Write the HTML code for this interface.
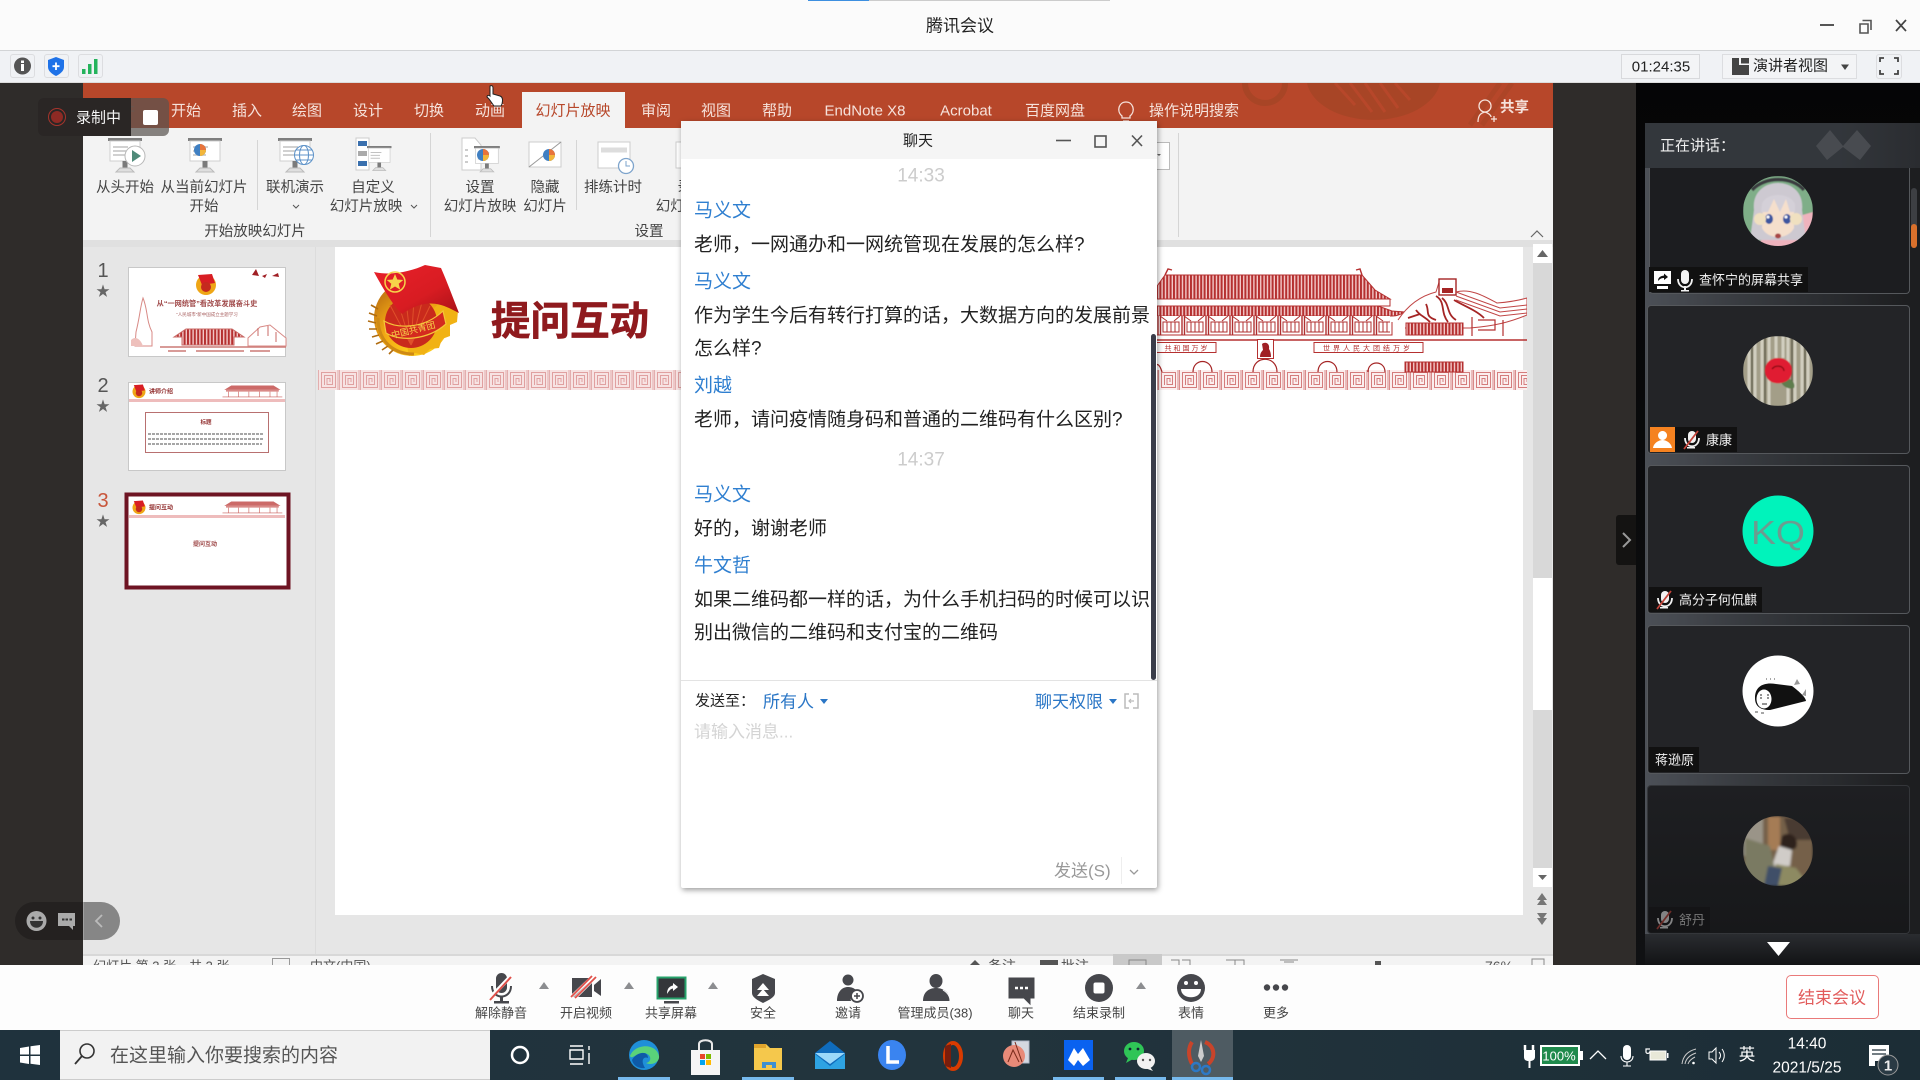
<!DOCTYPE html>
<html lang="zh-CN">
<head>
<meta charset="utf-8">
<title>腾讯会议</title>
<style>
html,body{margin:0;padding:0;width:1920px;height:1080px;overflow:hidden;background:#2f2c2a}
body{position:relative;font-family:"Liberation Sans","Noto Sans CJK SC",sans-serif;color:#222}
div,span{position:absolute;box-sizing:border-box}
svg{position:absolute;left:0;top:0;overflow:hidden}
.t{white-space:nowrap;line-height:1;transform:translateY(-50%)}
.c{white-space:nowrap;line-height:1;transform:translate(-50%,-50%)}
.rt{font-size:15px;color:#f6e2db;top:110px}
.rb{font-size:14.5px;color:#444}
.msg{font-size:19px;color:#222;left:694px}
.nm{font-size:19px;color:#2f7fd0;left:694px}
.tm{font-size:13px;color:#444;top:1013px}
.lb{background:#111;height:25px}
.nl{font-size:13px;color:#f2f2f2}
</style>
</head>
<body>
<!-- title bar -->
<div style="left:0;top:0;width:1920px;height:50px;background:#fbfbfb"></div>
<div style="left:808px;top:0;width:61px;height:1px;background:#3d8fe0"></div>
<div style="left:869px;top:0;width:241px;height:1px;background:#ccc"></div>
<div class="c" style="left:960px;top:26px;font-size:17px;color:#222">腾讯会议</div>
<div style="left:0;top:50px;width:1920px;height:33px;background:#f0f2f5;border-top:1px solid #d2d4d6;border-bottom:1px solid #dcdcdc"></div>

<!-- dark bg -->
<div style="left:0;top:83px;width:1636px;height:882px;background:#2f2c2a"></div>
<div style="left:1636px;top:83px;width:284px;height:882px;background:linear-gradient(180deg,#050506,#101113)"></div>

<!-- PPT -->
<div style="left:83px;top:83px;width:1470px;height:882px;background:#e6e6e6"></div>
<div style="left:83px;top:83px;width:1470px;height:45px;background:#b7472a"></div>
<div style="left:522px;top:92px;width:103px;height:36px;background:#f3f3f3"></div>
<div style="left:83px;top:128px;width:1470px;height:112px;background:#f3f3f3"></div>
<div style="left:83px;top:240px;width:1470px;height:7px;background:#e0e0e0"></div>
<div style="left:315px;top:247px;width:1238px;height:708px;background:#e6e6e6;border-left:1px solid #dcdcdc"></div>
<div style="left:335px;top:247px;width:1188px;height:668px;background:#fff"></div>
<div style="left:1533px;top:244px;width:19px;height:643px;background:#d8d8d8"></div>
<div style="left:1533px;top:244px;width:19px;height:19px;background:#fff"></div>
<div style="left:1533px;top:578px;width:19px;height:132px;background:#fff"></div>
<div style="left:1533px;top:868px;width:19px;height:19px;background:#fff"></div>
<div style="left:83px;top:954px;width:1470px;height:11px;background:#f3f3f3;border-top:2px solid #d8d8d8"></div>
<div style="left:1113px;top:954px;width:49px;height:11px;background:#c9c9c9"></div>

<div class="rt c" style="left:120px;top:111px;color:#8f5a4a">文件</div>
<div class="rt c" style="left:186px;top:110.500px">开始</div>
<div class="rt c" style="left:247px;top:110.500px">插入</div>
<div class="rt c" style="left:307px;top:110.500px">绘图</div>
<div class="rt c" style="left:368px;top:110.500px">设计</div>
<div class="rt c" style="left:429px;top:110.500px">切换</div>
<div class="rt c" style="left:490px;top:110.500px">动画</div>
<div class="rt c" style="left:573px;top:110.500px;color:#b7472a">幻灯片放映</div>
<div class="rt c" style="left:656px;top:110.500px">审阅</div>
<div class="rt c" style="left:716px;top:110.500px">视图</div>
<div class="rt c" style="left:777px;top:110.500px">帮助</div>
<div class="rt c" style="left:865px;top:110.500px">EndNote X8</div>
<div class="rt c" style="left:966px;top:110.500px">Acrobat</div>
<div class="rt c" style="left:1055px;top:110.500px">百度网盘</div>
<div class="rt t" style="left:1149px;top:110.500px">操作说明搜索</div>
<div class="rt t" style="left:1500px;top:108px;font-weight:bold;font-size:14.500px">共享</div>

<div class="rb c" style="left:125px;top:188px">从头开始</div>
<div class="rb c" style="left:204px;top:188px">从当前幻灯片</div>
<div class="rb c" style="left:204px;top:207px">开始</div>
<div class="rb c" style="left:295px;top:188px">联机演示</div>
<div class="rb c" style="left:373px;top:188px">自定义</div>
<div class="rb c" style="left:366px;top:207px">幻灯片放映</div>
<div class="rb c" style="left:480px;top:188px">设置</div>
<div class="rb c" style="left:480px;top:207px">幻灯片放映</div>
<div class="rb c" style="left:545px;top:188px">隐藏</div>
<div class="rb c" style="left:545px;top:207px">幻灯片</div>
<div class="rb c" style="left:613px;top:188px">排练计时</div>
<div class="rb c" style="left:692px;top:188px">录制</div>
<div class="rb c" style="left:692px;top:207px">幻灯片演示</div>
<div class="rb c" style="left:255px;top:232px">开始放映幻灯片</div>
<div class="rb c" style="left:649px;top:232px">设置</div>

<div class="c" style="left:103px;top:271px;font-size:20px;color:#555">1</div>
<div class="c" style="left:103px;top:386px;font-size:20px;color:#555">2</div>
<div class="c" style="left:103px;top:501px;font-size:20px;color:#c8553a">3</div>

<!-- status bar text clipped by toolbar -->
<div class="t" style="left:93px;top:966px;font-size:13px;color:#555">幻灯片 第 3 张，共 3 张</div>
<div class="t" style="left:310px;top:966px;font-size:13px;color:#555">中文(中国)</div>
<div class="t" style="left:988px;top:966px;font-size:14px;color:#555">备注</div>
<div class="t" style="left:1061px;top:966px;font-size:14px;color:#555">批注</div>
<div class="t" style="left:1485px;top:966px;font-size:14px;color:#555">76%</div>

<!-- PPT graphics -->
<svg width="1920" height="1080" viewBox="0 0 1920 1080">
<defs>
<pattern id="key" width="21" height="20" patternUnits="userSpaceOnUse" x="318" y="370">
<rect width="21" height="20" fill="#f7e3e3"/>
<path d="M.5 0V20M20 0V20" stroke="#e3aeae" stroke-width="1"/>
<path d="M3.500 2.500H17.500V17.500H3.500ZM6.500 15V5.500H14.500V14.500H9V8.500H12V12" fill="none" stroke="#e0a0a0" stroke-width="1"/>
</pattern>
<pattern id="keyr" width="21" height="20" patternUnits="userSpaceOnUse" x="318" y="370">
<rect width="21" height="20" fill="#fbeeee"/>
<path d="M.5 0V20M20 0V20" stroke="#d88a8a" stroke-width="1"/>
<path d="M3.500 2.500H17.500V17.500H3.500ZM6.500 15V5.500H14.500V14.500H9V8.500H12V12" fill="none" stroke="#d47c7c" stroke-width="1"/>
</pattern>
<pattern id="roof" width="3.400" height="10" patternUnits="userSpaceOnUse">
<rect width="3.400" height="10" fill="#f3c9c9"/><rect width="2" height="10" fill="#b53030"/>
</pattern>
<pattern id="win" width="24" height="19" patternUnits="userSpaceOnUse" x="1157" y="316">
<rect width="24" height="19" fill="#fff"/>
<path d="M1 0V19M3.500 0V19" stroke="#b03030" stroke-width="1.400"/>
<path d="M6 6H22V16H6ZM10 6V16M14 6V16M18 6V16" fill="none" stroke="#b03030" stroke-width="1"/>
<path d="M3 0L10 5M23 0L17 5" stroke="#b03030" stroke-width="1"/>
</pattern>
<radialGradient id="gold" cx=".6" cy=".8" r=".75"><stop offset="0" stop-color="#ffdf20"/><stop offset=".6" stop-color="#f4ab14"/><stop offset="1" stop-color="#c87c12"/></radialGradient>
<linearGradient id="flag" x1="0" y1="0" x2="1" y2="1"><stop offset="0" stop-color="#e8202a"/><stop offset=".6" stop-color="#d81c22"/><stop offset="1" stop-color="#a81218"/></linearGradient>
<filter id="bl" x="-5%" y="-5%" width="110%" height="110%"><feGaussianBlur stdDeviation="1.200"/></filter>
<filter id="bl2" x="-5%" y="-5%" width="110%" height="110%"><feGaussianBlur stdDeviation=".5"/></filter>
<g id="emb">
<circle cx="0" cy="1" r="10" fill="#efa616"/><path d="M-8 -9L6 -10L9 -1L-4 1Z" fill="#d81e24"/><circle cx="0" cy="3" r="5" fill="#c52a1e"/>
</g>
<g id="blg" fill="none" stroke="#c9605c" stroke-width=".7">
<path d="M6 4H54L62 9H-2Z" fill="#cc6a68" stroke="none"/><path d="M0 9H60V11H0Z" fill="#d98a88" stroke="none"/><path d="M3 11V17M14 11V17M26 11V17M38 11V17M50 11V17M58 11V17M-4 17H64"/>
</g>
<g id="bd">
<rect x="0" y="0" width="34" height="3" fill="#7e7e7e"/>
<rect x="2" y="3" width="30" height="20" fill="#fff" stroke="#cfcfcf"/>
<path d="M5 9H20M5 13H18M5 17H18" stroke="#c2c2c2" stroke-width="1.400"/>
<rect x="14.500" y="23" width="5" height="8" fill="#7b7b7b"/>
<path d="M8 34L12 30H22L26 34Z" fill="#dfdfdf" stroke="#bbb"/>
</g>
<g id="pie"><circle r="6" fill="#3f7fc2"/><path d="M0 0V-6A6 6 0 0 1 6 0Z" fill="#e8743b"/><path d="M0 0H6A6 6 0 0 1 0 6Z" fill="#f3b63a"/></g>
<clipPath id="a1"><circle cx="1778" cy="211" r="35"/></clipPath>
<clipPath id="a2"><circle cx="1778" cy="371" r="35"/></clipPath>
<clipPath id="a4"><circle cx="1778" cy="691" r="35"/></clipPath>
<clipPath id="a5"><circle cx="1778" cy="851" r="35"/></clipPath>
<clipPath id="slide"><rect x="1157" y="247" width="370" height="150"/></clipPath>
<clipPath id="rib"><rect x="1190" y="83" width="363" height="45"/></clipPath>
</defs>

<!-- ribbon deco -->
<g clip-path="url(#rib)" fill="none" stroke="#a84526">
<circle cx="1265" cy="83" r="20" stroke-width="6"/>
<path d="M1307 83A67 42 0 0 0 1440 83Z" fill="#a84526" stroke="none"/>
<path d="M1335 83L1355 105M1350 83L1372 112M1365 83L1385 112M1380 83L1398 108M1395 83L1410 100" stroke="#b7472a" stroke-width="3"/>
<path d="M1470 125L1500 83M1482 125L1512 83" stroke-width="5" opacity=".7"/>
</g>
<!-- lightbulb, share person -->
<g fill="none" stroke="#f6e2db" stroke-width="1.300">
<path d="M1122 116C1116 111 1119 102 1126 102C1133 102 1136 111 1130 116V118H1122ZM1123 121H1129"/>
<circle cx="1485" cy="106" r="6"/><path d="M1478 122C1478 115 1481 113 1485 112C1488 113 1491 115 1491 117M1491 119H1497M1494 116V122"/>
</g>
<!-- ribbon separators -->
<g stroke="#d5d5d5">
<path d="M430.500 133V237M1178.500 133V237M257.500 140V210M576.500 140V210"/>
</g>
<path d="M1531 237L1537 231L1543 237" fill="none" stroke="#666" stroke-width="1.200"/>
<path d="M293 205l3 3l3-3M411 205l3 3l3-3" fill="none" stroke="#555"/>
<rect x="1150.500" y="142.500" width="19" height="27" fill="#fff" stroke="#bbb"/>
<path d="M1157 154h4l-2 2z" fill="#666"/>
<!-- ribbon icons -->
<use href="#bd" x="108" y="138"/>
<circle cx="135" cy="156" r="10" fill="#fff" stroke="#b8b8b8"/><path d="M132 150L141 156L132 162Z" fill="#4f8a79"/>
<use href="#bd" x="188" y="138"/><use href="#pie" x="200" y="150"/>
<use href="#bd" x="278" y="138"/>
<g fill="#fff" stroke="#5d92c8" stroke-width="1"><circle cx="304" cy="155" r="9.500"/><ellipse cx="304" cy="155" rx="4.500" ry="9.500" fill="none"/><path d="M294.500 155H313.500M296 150H312M296 160H312" fill="none"/></g>
<rect x="356" y="138" width="13" height="32" fill="#fff" stroke="#ccc"/><rect x="358" y="141" width="9" height="5" fill="#3a70ae"/><rect x="358" y="151" width="9" height="5" fill="#aaa"/><rect x="358" y="161" width="9" height="5" fill="#3a70ae"/>
<g transform="translate(367,146) scale(.72)"><use href="#bd"/></g>
<path d="M462 138H475L481 145V170H462Z" fill="#fff" stroke="#ccc"/><path d="M465 150h3M465 156h3M465 162h3" stroke="#999"/>
<g transform="translate(474,146) scale(.76)"><use href="#bd"/></g><use href="#pie" x="483" y="155"/>
<rect x="529" y="142" width="32" height="25" fill="#fff" stroke="#ccc"/><path d="M529 167L561 142" stroke="#999"/><use href="#pie" x="549" y="155"/>
<rect x="598" y="142" width="32" height="26" fill="#fff" stroke="#ccc"/><path d="M601 150H627" stroke="#ddd" stroke-width="5"/>
<circle cx="626" cy="166" r="7.500" fill="#fff" stroke="#7ea4cc" stroke-width="1.300"/><path d="M626 161V166H630" fill="none" stroke="#7ea4cc"/>
<rect x="676" y="142" width="30" height="26" fill="#fff" stroke="#ccc"/>

<!-- stars -->
<g fill="#666" font-size="14" text-anchor="middle"><text x="103" y="296">★</text><text x="103" y="411">★</text><text x="103" y="526">★</text></g>

<!-- thumbs -->
<rect x="128.500" y="267.500" width="157" height="89" fill="#fff" stroke="#c8c8c8"/>
<use href="#emb" x="206" y="284"/>
<text x="207" y="306" font-size="7.200" font-weight="bold" fill="#a04a4a" text-anchor="middle">从“一网统管”看改革发展奋斗史</text>
<text x="207" y="316" font-size="4.500" fill="#a86060" text-anchor="middle">“人民城市”新中国成立主题学习</text>
<path d="M174 337L186 329H232L244 337H234V345H182V337Z" fill="url(#roof)" stroke="#c96a66"/>
<path d="M160 347H286M168 351H186M196 351H244M250 351H270" stroke="#cc7a76" stroke-width="1.600"/>
<path d="M136 332C140 316 140 308 143 298C148 310 146 320 152 332V346H135Z" fill="#fff" stroke="#d88a86"/><path d="M131 340C135 336 140 338 143 346H131Z" fill="#eec0bc"/>
<path d="M248 338L260 327L270 325L286 338V346H248Z" fill="#fff" stroke="#d88a86"/><path d="M258 328V336M268 326V336M276 332V342" stroke="#c96a66"/>
<path d="M252 275l4-6l3 7zM262 276l5-2l-2 4zM272 276l6-3l1 4z" fill="#a01f24"/>
<rect x="128.500" y="382.500" width="157" height="88" fill="#fff" stroke="#c8c8c8"/>
<g transform="translate(139,391) scale(.65)"><use href="#emb"/></g>
<text x="149" y="393.500" font-size="6" font-weight="bold" fill="#8f2a2a">讲师介绍</text>
<g transform="translate(226,382) scale(.88)"><use href="#blg"/></g>
<rect x="129" y="399" width="156" height="3" fill="#eebcbc"/>
<rect x="145.500" y="412.500" width="123" height="40" fill="#fff" stroke="#b87070"/>
<text x="206" y="424" font-size="5.500" font-weight="bold" fill="#8f2a2a" text-anchor="middle">标题</text>
<g stroke="#888" stroke-width="1.400" stroke-dasharray="3 1"><path d="M148 434H264M148 439H264M148 444H262"/></g>
<rect x="126.500" y="494.500" width="162" height="93" fill="#fff" stroke="#6e1423" stroke-width="4"/>
<g transform="translate(139,507) scale(.65)"><use href="#emb"/></g>
<text x="149" y="509.500" font-size="6" font-weight="bold" fill="#8f2a2a">提问互动</text>
<g transform="translate(226,498) scale(.88)"><use href="#blg"/></g>
<rect x="129" y="515" width="156" height="3" fill="#eebcbc"/>
<text x="205" y="546" font-size="6" font-weight="bold" fill="#9c4444" text-anchor="middle">提问互动</text>

<!-- slide band + emblem -->
<rect x="318" y="370" width="840" height="20" fill="url(#key)"/>
<rect x="1157" y="370" width="370" height="20" fill="url(#keyr)"/>
<g>
<circle cx="412" cy="318" r="38" fill="url(#gold)"/>
<path d="M445 296l7 3l-1 9l7 3l-1 11l-7 3l0 11l-8 3l-3 9l-9 1l-6 6l-9-2l-6 3l-3-16z" fill="#f1b214"/>
<g fill="none" stroke="#b06c10" stroke-width="1.600"><path d="M371 305l7 4M369 313l8 3M368 321l8 2M369 329l8 0M372 337l7-2M376 344l7-3M382 350l6-4M389 354l5-5"/></g>
<path d="M378 318C378 342 394 354 414 354" fill="none" stroke="#cf8a14" stroke-width="3"/>
<circle cx="411" cy="322" r="26" fill="#c92a1c"/>
<g stroke="#e0502a" stroke-width="1"><path d="M411 345L390 305M411 345L398 302M411 345L406 300M411 345L414 300M411 345L422 302M411 345L430 306"/></g>
<path d="M384 321C398 329 424 329 443 311L446 324C428 340 400 342 386 333Z" fill="#d42a1f" stroke="#f5c63a" stroke-width="1.200"/>
<text x="414" y="333" font-size="9" fill="#f7d34a" text-anchor="middle" transform="rotate(-14 414 333)">中国共青团</text>
<path d="M374 272C392 276 412 271 425 265L441 268C448 284 453 298 459 313L449 308C432 300 418 303 402 314C394 306 386 294 374 272Z" fill="url(#flag)"/>
<circle cx="395" cy="282" r="10" fill="none" stroke="#f7d34a" stroke-width="1.500"/>
<path d="M395 274l2.300 5.500l6 .5l-4.600 3.800l1.500 5.800l-5.200-3.100l-5.200 3.100l1.500-5.800l-4.600-3.800l6-.5z" fill="#f7d34a"/>
</g>
<text x="491" y="335" font-size="39.500" font-weight="bold" fill="#8f1a1e" font-family="Liberation Sans,Noto Sans CJK SC,sans-serif" stroke="#8f1a1e" stroke-width=".7">提问互动</text>

<!-- Tiananmen -->
<g clip-path="url(#slide)">
<path d="M1150 296L1165 275H1362L1375 290L1390 299H1150Z" fill="url(#roof)" stroke="#b53030"/>
<path d="M1165 275L1168 269L1172 270M1362 275L1360 269L1356 270" fill="none" stroke="#b53030" stroke-width="1.400"/>
<path d="M1150 299H1390V306H1150Z" fill="#fff" stroke="#b53030"/>
<path d="M1150 306H1378L1392 311L1405 312C1398 316 1395 316 1390 316H1150Z" fill="url(#roof)" stroke="#b53030"/>
<rect x="1150" y="316" width="240" height="19" fill="url(#win)"/>
<path d="M1150 335H1392V322" fill="none" stroke="#b53030"/>
<path d="M1398 320C1408 305 1420 296 1436 292L1440 279H1456V292C1470 288 1484 296 1497 303C1510 302 1520 300 1527 298V315C1510 322 1495 326 1470 328H1405" fill="#fff" stroke="#c04545"/>
<rect x="1439" y="279" width="17" height="16" fill="#fff" stroke="#a52525" stroke-width="1.400"/><rect x="1442" y="288" width="11" height="5" fill="#a52525"/>
<g fill="none" stroke="#a52525" stroke-width="1.800"><path d="M1436 296C1446 302 1440 312 1448 322M1426 304C1430 312 1424 316 1436 320M1442 298C1450 304 1446 314 1456 320M1416 310C1420 316 1424 316 1430 322M1454 300C1464 306 1476 310 1484 318M1408 318L1420 314"/></g>
<path d="M1456 292L1500 308L1527 305M1456 296L1500 312L1527 309M1456 300L1500 316L1527 313" fill="none" stroke="#c04545"/>
<rect x="1406" y="323" width="57" height="12" fill="url(#roof)" stroke="#b53030"/>
<path d="M1472 317V336M1503 320V336M1478 320H1495V330H1478" fill="none" stroke="#b53030" stroke-width="1.200"/>
<path d="M1150 340H1527" stroke="#b53030" stroke-width="1.400"/>
<rect x="1150" y="342.500" width="66" height="10" fill="#fff" stroke="#b53030"/>
<rect x="1314" y="342.500" width="109" height="10" fill="#fff" stroke="#b53030"/>
<text x="1187" y="350.500" font-size="7" fill="#b53030" text-anchor="middle" letter-spacing="2">共和国万岁</text>
<text x="1368" y="350.500" font-size="7" fill="#b53030" text-anchor="middle" letter-spacing="3">世界人民大团结万岁</text>
<rect x="1257.500" y="339.500" width="16" height="19" fill="#fff" stroke="#b53030"/>
<path d="M1262 344C1266 341 1270 344 1269 349C1271 352 1271 356 1271 357H1260C1260 353 1262 351 1263 350Z" fill="#a01f24"/>
<g fill="none" stroke="#a52525" stroke-width="1.200">
<path d="M1150 372C1156 362 1159 362 1162 372"/><path d="M1193 372C1193 358 1212 358 1212 372"/><path d="M1253 372C1253 355 1277 355 1277 372"/><path d="M1318 372C1318 358 1337 358 1337 372"/><path d="M1368 372C1368 360 1385 360 1385 372"/>
</g>
<rect x="1405" y="362" width="58" height="10" fill="url(#roof)" stroke="#b53030"/>
</g>

<!-- scrollbar arrows -->
<path d="M1537 257L1542.500 250L1548 257Z" fill="#666"/>
<path d="M1538 875H1547L1542.500 880Z" fill="#666"/>
<path d="M1537 900L1542 893L1547 900ZM1537 905L1542 898L1547 905Z" fill="#777"/>
<path d="M1537 913L1542 920L1547 913ZM1537 918L1542 925L1547 918Z" fill="#777"/>
<!-- status bar marks -->
<rect x="272.500" y="958.500" width="17" height="10" fill="none" stroke="#999"/>
<path d="M970 965L975 960L980 965Z" fill="#555"/><rect x="1040" y="960" width="18" height="6" fill="#555"/>
<rect x="1129" y="960" width="17" height="8" fill="none" stroke="#888"/>
<path d="M1171 960H1179V968M1182 960H1190V968M1226 960H1244V968M1235 960V968M1280 960H1298M1284 962H1294" fill="none" stroke="#888"/>
<rect x="1375" y="961" width="6" height="5" fill="#555"/><rect x="1532" y="959" width="12" height="8" fill="none" stroke="#888"/>
</svg>

<!-- recording pill -->
<div style="left:38px;top:98px;width:93px;height:38px;background:#2a2625;border-radius:6px 0 0 6px"></div>
<div style="left:131px;top:98px;width:38px;height:38px;background:rgba(90,84,80,.72);border-radius:0 6px 6px 0"></div>
<div class="t" style="left:76px;top:118px;font-size:15px;color:#f4f4f4">录制中</div>
<div style="left:143px;top:110px;width:15px;height:15px;background:#fff;border-radius:2px"></div>
<div style="left:48px;top:108px;width:18px;height:18px;border-radius:50%;border:1.500px solid #a5342c"></div>
<div style="left:51px;top:111px;width:12px;height:12px;border-radius:50%;background:#8e2a24"></div>

<!-- left float -->
<div style="left:15px;top:902px;width:68px;height:38px;background:#242120;border-radius:19px 0 0 19px"></div>
<div style="left:83px;top:902px;width:37px;height:38px;background:#868686;border-radius:0 19px 19px 0;border-left:1px solid #a0a0a0"></div>

<!-- Chat window -->
<div style="left:681px;top:121px;width:476px;height:767px;background:#fff;box-shadow:1px 2px 6px rgba(0,0,0,.4);border-radius:2px"></div>
<div style="left:681px;top:121px;width:476px;height:38px;background:#f5f5f5"></div>
<div class="c" style="left:918px;top:140.500px;font-size:15px;color:#222">聊天</div>
<div class="c" style="left:921px;top:176px;font-size:19px;color:#ccc">14:33</div>
<div class="t nm" style="top:210.500px">马义文</div>
<div class="t msg" style="top:244.500px">老师，一网通办和一网统管现在发展的怎么样?</div>
<div class="t nm" style="top:282px">马义文</div>
<div class="t msg" style="top:315.500px">作为学生今后有转行打算的话，大数据方向的发展前景</div>
<div class="t msg" style="top:348.500px">怎么样?</div>
<div class="t nm" style="top:386px">刘越</div>
<div class="t msg" style="top:419.500px">老师，请问疫情随身码和普通的二维码有什么区别?</div>
<div class="c" style="left:921px;top:460px;font-size:19px;color:#ccc">14:37</div>
<div class="t nm" style="top:494.500px">马义文</div>
<div class="t msg" style="top:528.500px">好的，谢谢老师</div>
<div class="t nm" style="top:566px">牛文哲</div>
<div class="t msg" style="top:599.500px">如果二维码都一样的话，为什么手机扫码的时候可以识</div>
<div class="t msg" style="top:632.500px">别出微信的二维码和支付宝的二维码</div>
<div style="left:1151px;top:334px;width:5px;height:346px;background:#3a3d4a;border-radius:3px"></div>
<div style="left:681px;top:680px;width:476px;height:1px;background:#e3e3e3"></div>
<div class="t" style="left:695px;top:701px;font-size:15px;color:#222">发送至：</div>
<div class="t" style="left:763px;top:701.500px;font-size:17px;color:#2a76c6">所有人</div>
<div class="t" style="left:1035px;top:701.500px;font-size:17px;color:#2a76c6">聊天权限</div>
<div class="t" style="left:694px;top:731.500px;font-size:17px;color:#d4d4d4">请输入消息...</div>
<div class="t" style="left:1054px;top:871px;font-size:17px;color:#999">发送(S)</div>
<div style="left:1121px;top:857px;width:1px;height:27px;background:#eee"></div>

<!-- Right panel -->
<div style="left:1645px;top:123px;width:275px;height:842px;background:linear-gradient(90deg,#4c5057 0,#383b40 35%,#1d1e20 95%)"></div>
<div style="left:1645px;top:123px;width:275px;height:45px;background:linear-gradient(90deg,#33373c,#33373c 70%,#2a2c30)"></div>
<div class="t" style="left:1660px;top:145.500px;font-size:15px;color:#f0f0f0">正在讲话：</div>
<div style="left:1645px;top:934px;width:275px;height:31px;background:linear-gradient(180deg,#2a2c30,#121315)"></div>
<div style="left:1649px;top:168px;width:261px;height:126px;background:#1c1d20;border:1px solid #55585c;border-top:0;border-radius:0 0 4px 4px"></div>
<div style="left:1647px;top:305px;width:263px;height:149px;background:#232427;border:1px solid #55585c;border-radius:4px"></div>
<div style="left:1647px;top:465px;width:263px;height:149px;background:#232427;border:1px solid #55585c;border-radius:4px"></div>
<div style="left:1647px;top:625px;width:263px;height:149px;background:#232427;border:1px solid #55585c;border-radius:4px"></div>
<div style="left:1647px;top:785px;width:263px;height:149px;background:linear-gradient(180deg,#1e1f22,#17181a);border:1px solid #34363a;border-radius:4px"></div>
<div class="lb" style="left:1649px;top:267px;width:159px"></div>
<div class="lb" style="left:1650px;top:427px;width:87px"></div>
<div style="left:1650px;top:427px;width:25px;height:25px;background:#f58220"></div>
<div class="lb" style="left:1649px;top:587px;width:113px"></div>
<div class="lb" style="left:1649px;top:747px;width:50px"></div>
<div class="lb" style="left:1649px;top:907px;width:61px;background:#141416"></div>
<div class="t nl" style="left:1699px;top:279.500px">查怀宁的屏幕共享</div>
<div class="t nl" style="left:1706px;top:439.500px">康康</div>
<div class="t nl" style="left:1679px;top:599.500px">高分子何侃麒</div>
<div class="t nl" style="left:1655px;top:759.500px">蒋逊原</div>
<div class="t nl" style="left:1679px;top:919.500px;color:#777">舒丹</div>
<div style="left:1616px;top:515px;width:20px;height:50px;background:#141312;border-radius:3px 0 0 3px"></div>
<div style="left:1911px;top:188px;width:6px;height:60px;background:#3d3f43;border-radius:3px"></div>
<div style="left:1911px;top:224px;width:6px;height:24px;background:#d9702c;border-radius:3px"></div>

<!-- Toolbar + toolbar text -->
<div style="left:0;top:965px;width:1920px;height:65px;background:#fdfdfd"></div>
<div class="tm c" style="left:501px">解除静音</div>
<div class="tm c" style="left:586px">开启视频</div>
<div class="tm c" style="left:671px">共享屏幕</div>
<div class="tm c" style="left:763px">安全</div>
<div class="tm c" style="left:848px">邀请</div>
<div class="tm c" style="left:935px">管理成员(38)</div>
<div class="tm c" style="left:1021px">聊天</div>
<div class="tm c" style="left:1099px">结束录制</div>
<div class="tm c" style="left:1191px">表情</div>
<div class="tm c" style="left:1276px">更多</div>
<div style="left:1786px;top:975px;width:93px;height:44px;background:#fff;border:1.500px solid #ea7a7a;border-radius:5px"></div>
<div class="c" style="left:1832px;top:998px;font-size:17px;color:#e25c5c">结束会议</div>

<!-- Taskbar -->
<div style="left:0;top:1030px;width:1920px;height:50px;background:linear-gradient(90deg,#1f323d,#22343d 50%,#1c2d36)"></div>
<div style="left:60px;top:1030px;width:430px;height:50px;background:#f2f2f2;border-top:1px solid #ccc;border-bottom:1px solid #ccc"></div>
<div class="t" style="left:110px;top:1055.500px;font-size:19px;color:#555">在这里输入你要搜索的内容</div>
<div style="left:1172px;top:1030px;width:61px;height:50px;background:#4e5b62"></div>
<div style="left:618px;top:1077px;width:52px;height:3px;background:#76b9ed"></div>
<div style="left:742px;top:1077px;width:52px;height:3px;background:#76b9ed"></div>
<div style="left:1053px;top:1077px;width:51px;height:3px;background:#76b9ed"></div>
<div style="left:1115px;top:1077px;width:51px;height:3px;background:#76b9ed"></div>
<div style="left:1172px;top:1077px;width:61px;height:3px;background:#76b9ed"></div>
<div class="c" style="left:1807px;top:1044px;font-size:15.500px;color:#fff">14:40</div>
<div class="c" style="left:1807px;top:1067.500px;font-size:15.500px;color:#fff">2021/5/25</div>
<div class="c" style="left:1747px;top:1055px;font-size:16.500px;color:#fff">英</div>
<div style="left:1540px;top:1045px;width:40px;height:21px;border:2px solid #fff;background:#1f8a4c"></div>
<div class="c" style="left:1559px;top:1055.500px;font-size:13px;color:#fff">100%</div>

<!-- Top layer -->
<div style="left:10px;top:54px;width:25px;height:24px;border:1px solid #dcdde0;border-radius:3px"></div>
<div style="left:44px;top:54px;width:25px;height:24px;border:1px solid #dcdde0;border-radius:3px"></div>
<div style="left:78px;top:54px;width:25px;height:24px;border:1px solid #dcdde0;border-radius:3px"></div>
<div style="left:1621px;top:54px;width:79px;height:25px;border:1px solid #d8d9dc;background:#f3f4f6"></div>
<div class="c" style="left:1661px;top:66.500px;font-size:15px;color:#222">01:24:35</div>
<div style="left:1722px;top:54px;width:135px;height:25px;border:1px solid #dcdde0;background:#f3f4f6"></div>
<div class="t" style="left:1753px;top:66px;font-size:15px;color:#222">演讲者视图</div>
<div style="left:1876px;top:54px;width:26px;height:25px;border:1px solid #dcdde0;border-radius:3px"></div>

<svg width="1920" height="1080" viewBox="0 0 1920 1080">
<!-- window controls -->
<path d="M1820 25H1834" stroke="#555" stroke-width="2"/>
<path d="M1860 24H1868V33H1860Z M1862.500 20.500H1871V30" fill="none" stroke="#555" stroke-width="1.600"/>
<path d="M1896 20L1906 31M1906 20L1896 31" stroke="#444" stroke-width="1.700"/>
<!-- top left icons -->
<circle cx="22.500" cy="66" r="8.500" fill="#555"/><rect x="21" y="64" width="3" height="7" fill="#fff"/><rect x="21" y="60.500" width="3" height="2.500" fill="#fff"/>
<path d="M56 57L64 60V67C64 71 60 74 56 76C52 74 48 71 48 67V60Z" fill="#1e72e8"/><path d="M56 62.500V70M52.500 66.200H59.500" stroke="#fff" stroke-width="1.800"/>
<path d="M82 69h3.500v5H82ZM88 64h3.500v10H88ZM94 59h3.500v15H94Z" fill="#24b35c"/>
<!-- view + fullscreen -->
<path d="M1732 58H1739V65H1749V75H1732Z" fill="#444"/><path d="M1741 58H1749V63.500H1741Z" fill="#444"/>
<path d="M1841 64.500H1849L1845 70Z" fill="#444"/>
<path d="M1880 62V58H1884M1898 62V58H1894M1880 70V74H1884M1898 70V74H1894" fill="none" stroke="#444" stroke-width="1.800"/>
<!-- cursor -->
<path d="M490 86C492 85 493 86 493 88V94L500 96C503 97 503 100 502 104L501 106H494L489 99L487 97C487 95 489 95 490 96Z" fill="#fff" stroke="#222" stroke-width="1"/>
<!-- float icons -->
<circle cx="36.500" cy="921" r="10" fill="#aaa"/><circle cx="33" cy="918" r="1.500" fill="#333"/><circle cx="40" cy="918" r="1.500" fill="#333"/><path d="M30 921H43C43 930 30 930 30 921Z" fill="#333"/>
<path d="M58 913H75V926H73V930L69 926H58Z" fill="#aaa"/><path d="M62 919.500h2.500M65.500 919.500H68M69.500 919.500H72" stroke="#333" stroke-width="2"/>
<path d="M102 915L96 921L102 927" fill="none" stroke="#bbb" stroke-width="1.800"/>
<!-- chat controls -->
<path d="M1056 140.500H1071" stroke="#555" stroke-width="1.600"/>
<rect x="1095" y="136" width="11" height="11" fill="none" stroke="#555" stroke-width="1.600"/>
<path d="M1132 135.500L1142 146M1142 135.500L1132 146" stroke="#555" stroke-width="1.600"/>
<path d="M820 699H828L824 704Z M1109 699H1117L1113 704Z" fill="#2a76c6"/>
<path d="M1129 694H1125V708H1129M1133 694H1138V708H1133" fill="none" stroke="#bbb" stroke-width="1.500"/><path d="M1134 701H1129M1131 699L1129 701L1131 703" fill="none" stroke="#bbb" stroke-width="1.200"/>
<path d="M1130 870L1134 874L1138 870" fill="none" stroke="#999" stroke-width="1.300"/>

<!-- avatars -->
<g clip-path="url(#a1)">
<g filter="url(#bl2)">
<rect x="1743" y="176" width="70" height="70" fill="#7fae88"/><path d="M1778 222L1813 212V247H1755Z" fill="#eeb3bd"/>
<path d="M1754 210C1750 174 1806 174 1802 210L1806 240H1750Z" fill="#cdc9d1"/>
<path d="M1752 190C1765 176 1792 176 1804 190" fill="none" stroke="#3a3a40" stroke-width="3.500"/>
<path d="M1763 205C1768 196 1790 196 1794 205V228C1788 240 1768 240 1762 228Z" fill="#f5dfcc"/>
<path d="M1762 204C1766 192 1790 192 1795 204L1795 212H1790L1786 199L1780 212L1774 199L1768 212H1761Z" fill="#d4d0d8"/>
<ellipse cx="1769" cy="219" rx="4" ry="5" fill="#3e56a0"/><ellipse cx="1787" cy="219" rx="4" ry="5" fill="#3e56a0"/>
<circle cx="1760" cy="219" r="6" fill="#f0e0c0"/><circle cx="1796" cy="219" r="6" fill="#f0e0c0"/>
<circle cx="1768" cy="217" r="1.500" fill="#fff"/><circle cx="1786" cy="217" r="1.500" fill="#fff"/>
<ellipse cx="1778" cy="236" rx="3" ry="2.500" fill="#a84444"/>
</g></g>
<g clip-path="url(#a2)">
<g filter="url(#bl2)">
<rect x="1743" y="336" width="70" height="70" fill="#a39e88"/>
<path d="M1749 336V406M1755 336V406M1762 336V406M1769 336V406M1788 336V406M1795 336V406M1802 336V406M1808 336V406M1776 336V358M1783 336V358" stroke="#d2cfc0" stroke-width="3"/>
<path d="M1752 336V406M1765 336V406M1792 336V406M1805 336V406" stroke="#5c5846" stroke-width="1.500"/>
<path d="M1782 376C1790 378 1796 382 1794 388C1788 390 1782 386 1780 380Z" fill="#5f7d4e"/>
<path d="M1778 358C1790 358 1795 368 1790 378C1786 384 1772 386 1767 378C1762 370 1766 358 1778 358Z" fill="#e01e30"/><path d="M1772 369C1776 364 1784 366 1784 371" fill="none" stroke="#901018" stroke-width="1.500"/>
</g></g>
<circle cx="1778" cy="531" r="35.500" fill="#00f3bb"/>
<text x="1778" y="544" font-size="33" fill="#6c9c90" text-anchor="middle" textLength="54" lengthAdjust="spacingAndGlyphs" font-family="Liberation Sans,sans-serif">KQ</text>
<circle cx="1778" cy="691" r="35.500" fill="#fff"/>
<g clip-path="url(#a4)">
<path d="M1755 698C1755 686 1764 682 1776 684L1792 686C1800 692 1806 698 1806 701L1790 705L1770 710C1760 710 1755 706 1755 698Z" fill="#111"/>
<ellipse cx="1764" cy="699" rx="7.500" ry="9.500" fill="#fff"/>
<path d="M1760 695h2M1767 695h2M1760 698h2M1767 698h2M1762 704H1767" stroke="#555" stroke-width="1.200"/>
<path d="M1794 685l3-6l3 5zM1802 695l4-6l0 7z" fill="#999"/>
<path d="M1755 712h3M1761 713h3M1766 679h1M1770 679h1M1774 679h1" stroke="#888" stroke-width="1.500"/>
</g>
<g clip-path="url(#a5)">
<g filter="url(#bl)">
<rect x="1743" y="816" width="70" height="70" fill="#75604a"/>
<rect x="1743" y="816" width="20" height="40" fill="#9a9488"/>
<rect x="1768" y="816" width="12" height="34" fill="#a57c55"/>
<path d="M1784 818H1813V840H1790Z" fill="#4a3a30"/>
<path d="M1782 836C1790 830 1800 838 1796 848L1788 852L1780 846Z" fill="#2e231e"/>
<path d="M1779 846L1792 850L1790 866L1772 866Z" fill="#d0ccc8"/>
<path d="M1745 838L1770 846L1778 884H1745Z" fill="#7a7a62"/>
<path d="M1776 864L1796 868L1810 886H1770Z" fill="#8d8a62"/>
<path d="M1768 866L1782 868L1778 886H1764Z" fill="#3f5068"/>
</g></g>
<!-- tile label icons -->
<path d="M1654 271H1671V284H1654Z" fill="#fff"/><path d="M1658 281C1658 277 1661 276 1664 275.500V273.500L1668 277L1664 280V278C1661 278 1660 279 1658 281Z" fill="#111"/><rect x="1657" y="286" width="11" height="3" fill="#fff"/>
<g fill="#f2f2f2"><rect x="1681" y="270" width="8" height="14" rx="4"/><path d="M1678 279C1678 290 1692 290 1692 279" fill="none" stroke="#f2f2f2" stroke-width="1.800"/><rect x="1684" y="286" width="2" height="4"/><rect x="1681" y="290" width="8" height="1.500"/></g>
<path d="M1662.500 431a4.500 4.500 0 1 0 .1 0zM1653 448C1654 442 1660 440 1662.500 440C1665 440 1671 442 1672 448Z" fill="#fff"/>
<g id="mu"><g fill="#f2f2f2"><rect x="1688" y="431" width="8" height="12" rx="4"/><path d="M1685 438C1685 449 1699 449 1699 438" fill="none" stroke="#f2f2f2" stroke-width="1.800"/><rect x="1687" y="447" width="8" height="1.500"/></g><path d="M1684 449L1698 431" stroke="#c4443a" stroke-width="1.800"/></g>
<use href="#mu" x="-27" y="160"/>
<use href="#mu" x="-27" y="480" opacity=".5"/>
<!-- side/scroll -->
<path d="M1623 533L1630 540L1623 547" fill="none" stroke="#999" stroke-width="2"/>
<path d="M1767 942H1790L1778.500 956Z" fill="#fff"/>
<path d="M1816 146L1830 130L1843 146L1857 130L1871 146L1860 160L1843 147L1827 160Z" fill="#484b50"/>

<!-- toolbar icons -->
<g fill="#46474c">
<g>
<rect x="496" y="973" width="11" height="20" rx="5.500"/><path d="M492 986C492 1000 511 1000 511 986" fill="none" stroke="#46474c" stroke-width="2"/><rect x="500" y="996" width="3" height="5"/><rect x="494" y="1001" width="15" height="2.500"/>
<path d="M490 998L511 976" stroke="#fdfdfd" stroke-width="4"/><path d="M490 1000L511 977" stroke="#e0504a" stroke-width="2"/>
</g>
<g>
<rect x="572" y="978" width="20" height="19"/><path d="M594 985L601 979V996L594 991Z"/>
<path d="M570 998L593 976M575 998L597 976" stroke="#fdfdfd" stroke-width="3"/><path d="M571 997L592 976M575 998L596 977" stroke="#e0504a" stroke-width="1.800"/>
</g>
<g>
<rect x="657.500" y="977.500" width="28" height="21" fill="#34363a" stroke="#26a26b" stroke-width="2"/><rect x="664" y="1001" width="15" height="2.500"/>
<path d="M667 994C667 988 670 986 673 985.500V983L678 987L673 991V988.500C670 989 669 991 667 994Z" fill="#fff"/>
</g>
<path d="M539 985H549L544 978Z" fill="#8c8d90" transform="translate(0,4)"/><path d="M624 985H634L629 978Z" fill="#8c8d90" transform="translate(0,4)"/><path d="M708 985H718L713 978Z" fill="#8c8d90" transform="translate(0,4)"/><path d="M1136 985H1146L1141 978Z" fill="#8c8d90" transform="translate(0,4)"/>
<g>
<path d="M763 974L775 979V993C775 997 769 1000 763 1003C757 1000 752 997 752 993V979Z"/>
<path d="M763 983L769 990H757Z M763 989L769 996H757Z" fill="#fff"/>
</g>
<g>
<circle cx="848" cy="980" r="5.500"/><path d="M837 1001C837 992 842 987 848 987C851 987 854 988 856 990C852 992 850 997 851 1001Z"/>
<circle cx="857" cy="996" r="6" fill="#fff" stroke="#46474c" stroke-width="1.800"/><path d="M857 993V999M854 996H860" stroke="#46474c" stroke-width="1.500"/>
</g>
<g>
<ellipse cx="936" cy="981" rx="6.500" ry="7"/><path d="M923 1001C923 992 929 988 936 988C943 988 950 992 950 1001Z"/>
<path d="M943 990C948 993 950 997 950 1001" fill="none" stroke="#fff" stroke-width="1"/>
</g>
<g>
<path d="M1009 978H1034V998H1030V1004L1024 998H1009Z" stroke="#46474c"/><path d="M1015 988h3M1020 988h3M1025 988h3" stroke="#fff" stroke-width="2.500"/>
</g>
<circle cx="1099" cy="988" r="14"/><rect x="1093.500" y="982.500" width="11" height="11" rx="2" fill="#fff"/>
<circle cx="1191" cy="988" r="14"/><circle cx="1186" cy="983" r="2" fill="#fff"/><circle cx="1196" cy="983" r="2" fill="#fff"/><path d="M1181 989H1201C1201 1000 1181 1000 1181 989Z" fill="#fff"/>
<circle cx="1267" cy="987.500" r="3.200"/><circle cx="1276" cy="987.500" r="3.200"/><circle cx="1285" cy="987.500" r="3.200"/>
</g>

<!-- taskbar icons -->
<path d="M20 1048L29 1046.500V1054.500H20ZM30.500 1046.300L40 1045V1054.500H30.500ZM20 1056H29V1064L20 1062.500ZM30.500 1056H40V1065L30.500 1063.800Z" fill="#fff"/>
<circle cx="87" cy="1051" r="7" fill="none" stroke="#333" stroke-width="1.600"/><path d="M82 1056L75 1064" stroke="#333" stroke-width="1.800"/>
<circle cx="520" cy="1055" r="8" fill="none" stroke="#fff" stroke-width="2.500"/>
<path d="M570 1046H583M570 1064H583M570 1050H583V1059H570ZM589 1046V1050M589 1053V1064" fill="none" stroke="#fff" stroke-width="1.400"/>
<!-- edge -->
<circle cx="644" cy="1055" r="15" fill="#1f8fd8"/><path d="M630 1056C634 1044 656 1042 659 1056C660 1062 652 1066 646 1063C652 1062 652 1054 644 1053C636 1053 632 1060 630 1056Z" fill="#5ad27a"/><path d="M632 1060C636 1052 648 1050 648 1058C644 1056 640 1060 645 1068C638 1069 633 1065 632 1060Z" fill="#0e5aa8"/>
<!-- store -->
<rect x="691" y="1050" width="29" height="25" fill="#f5f5f5"/><path d="M699 1050V1044C699 1039 712 1039 712 1044V1050" fill="none" stroke="#e8e8e8" stroke-width="2"/><rect x="700" y="1054" width="5" height="5" fill="#e8452c"/><rect x="706" y="1054" width="5" height="5" fill="#7fba00"/><rect x="700" y="1060" width="5" height="5" fill="#00a4ef"/><rect x="706" y="1060" width="5" height="5" fill="#ffb900"/>
<!-- folder -->
<path d="M754 1044H766L770 1048H782V1070H754Z" fill="#f5c84c"/><rect x="754" y="1044" width="12" height="4" fill="#e0a42c"/><path d="M762 1068V1062H776V1068H772V1065H766V1068Z" fill="#3e8fd0"/>
<!-- mail -->
<path d="M815 1053L830 1041L845 1053V1069H815Z" fill="#0f6cbd"/><path d="M815 1053H845L830 1064Z" fill="#9ad8fa"/><path d="M815 1054L830 1066L845 1054V1069H815Z" fill="#2ea3e3"/>
<!-- L -->
<ellipse cx="892" cy="1055" rx="14" ry="15" fill="#3a84f0"/><path d="M888 1046V1062H899" fill="none" stroke="#fff" stroke-width="3.500"/>
<!-- office -->
<ellipse cx="953" cy="1056" rx="8" ry="13" fill="none" stroke="#d83b01" stroke-width="4"/><path d="M945 1046L951 1044V1068L945 1066Z" fill="#7a1d0c"/>
<!-- red round -->
<rect x="1012" y="1041" width="17" height="22" fill="#d4d8e0" stroke="#b0b8c8"/><circle cx="1014" cy="1056" r="11" fill="#e88a78"/><path d="M1008 1062L1013 1050L1019 1062M1015 1042L1022 1062" fill="none" stroke="#7a2a1a"/>
<!-- tencent -->
<rect x="1064" y="1040" width="29" height="30" fill="#0a62f0"/><path d="M1068 1060L1074 1048L1078 1054L1083 1048L1090 1060L1083 1066L1078 1060L1074 1066Z" fill="#fff"/>
<!-- wechat -->
<ellipse cx="1134" cy="1051" rx="10" ry="9" fill="#2fc557"/><path d="M1128 1058L1126 1063L1133 1059Z" fill="#2fc557"/><ellipse cx="1146" cy="1061" rx="9" ry="8" fill="#f2f2f2"/><path d="M1150 1067L1153 1071L1145 1068Z" fill="#f2f2f2"/><circle cx="1130" cy="1049" r="1.400" fill="#123"/><circle cx="1138" cy="1049" r="1.400" fill="#123"/><circle cx="1143" cy="1060" r="1.200" fill="#555"/><circle cx="1150" cy="1060" r="1.200" fill="#555"/>
<!-- scissors -->
<path d="M1192 1042C1188 1048 1188 1056 1192 1064M1205 1042C1215 1046 1216 1058 1208 1064" fill="none" stroke="#c8442a" stroke-width="4"/><path d="M1201 1040L1204 1056L1201 1062L1198 1056Z" fill="#ccc"/><circle cx="1196" cy="1067" r="4" fill="none" stroke="#2d78c4" stroke-width="2.500"/><circle cx="1206" cy="1070" r="4" fill="none" stroke="#2d78c4" stroke-width="2.500"/>
<!-- tray -->
<path d="M1525 1045V1050M1533 1045V1050" stroke="#fff" stroke-width="2.500"/><path d="M1524 1050H1535V1057C1535 1060 1532 1061 1530.500 1061V1068H1528.500V1061C1526 1061 1524 1060 1524 1057Z" fill="#fff"/>
<rect x="1580" y="1051" width="3" height="9" fill="#fff"/>
<path d="M1590 1059L1598 1051L1606 1059" fill="none" stroke="#fff" stroke-width="1.300"/>
<rect x="1623" y="1045" width="8" height="15" rx="4" fill="#fff"/><path d="M1621 1056C1621 1064 1633 1064 1633 1056M1627 1062V1066M1623 1066H1631" fill="none" stroke="#fff" stroke-width="1.100"/>
<rect x="1650" y="1051" width="16" height="9" fill="#e8e8d8" stroke="#fff"/><rect x="1667" y="1053" width="1.500" height="5" fill="#fff"/><path d="M1650 1049H1646V1052C1646 1054 1650 1054 1650 1051" fill="none" stroke="#fff" stroke-width="1.200"/>
<g fill="none" stroke="#ccc" stroke-width="1"><path d="M1682 1064C1683 1056 1688 1051 1696 1049"/><path d="M1685 1064C1686 1058 1690 1055 1696 1053"/><path d="M1688 1064C1689 1061 1691 1059 1695 1057"/></g><circle cx="1693.500" cy="1063" r="1.300" fill="#fff"/>
<path d="M1709 1052H1712L1716 1048V1063L1712 1059H1709ZM1719 1052C1721 1054 1721 1057 1719 1059M1722 1049C1725 1053 1725 1058 1722 1062" fill="none" stroke="#fff" stroke-width="1"/>
<path d="M1869 1045H1889V1061H1875V1066H1869Z" fill="#fff"/><path d="M1872 1050H1886M1872 1054H1886" stroke="#20303a" stroke-width="1.300"/>
<circle cx="1888" cy="1065" r="10" fill="#2a3a44" stroke="#999" stroke-width="1"/>
<text x="1888" y="1070.500" font-size="15" fill="#eee" text-anchor="middle" font-weight="bold" font-family="Liberation Sans,sans-serif">1</text>
</svg>
</body>
</html>
